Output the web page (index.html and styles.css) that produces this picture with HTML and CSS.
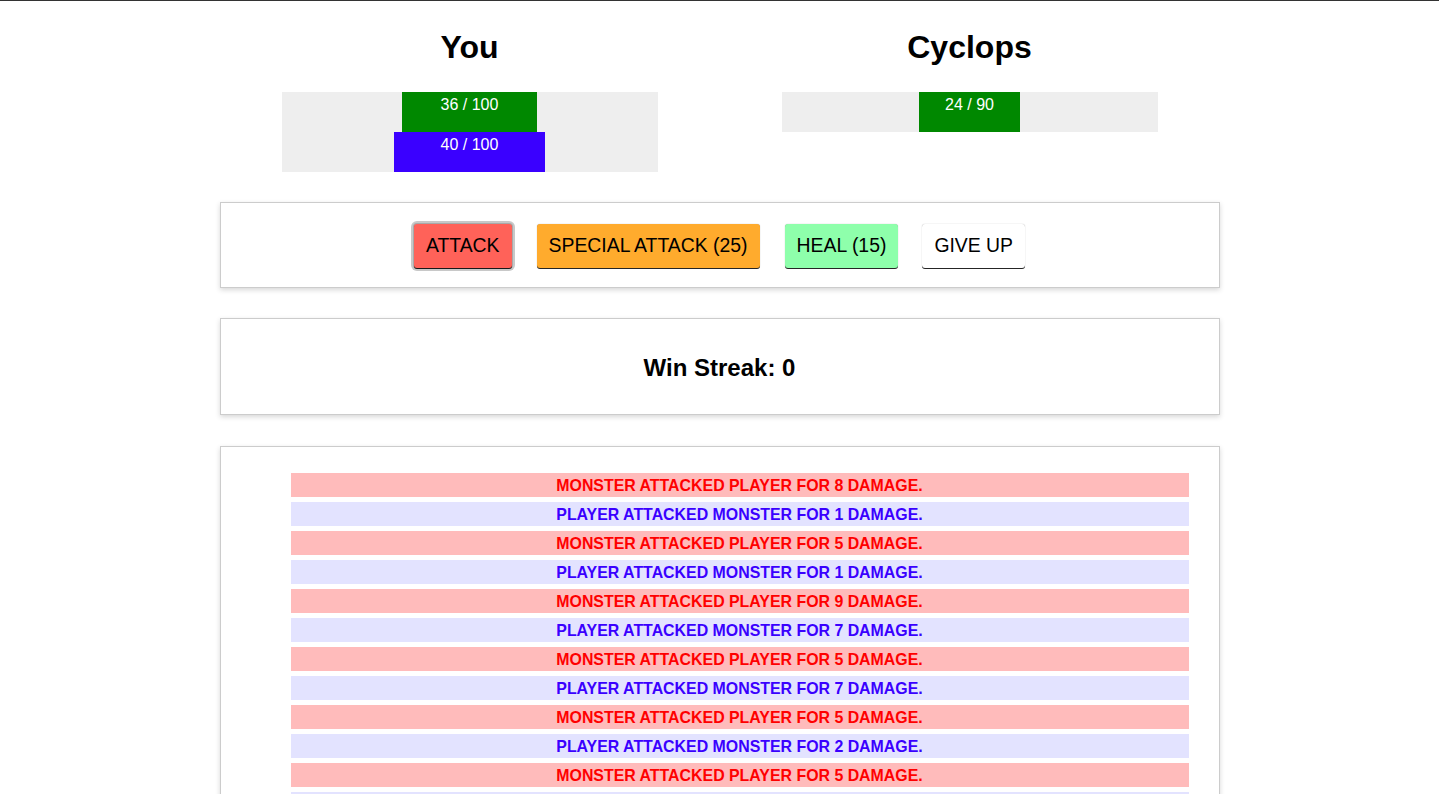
FILE: index.html
```html
<!DOCTYPE html>
<html lang="en">
<head>
<meta charset="utf-8">
<title>Monster Slayer</title>
<link rel="stylesheet" href="styles.css">
</head>
<body>
<main class="page">
  <section class="fighters">
    <div class="fighter">
      <h1 class="fighter-name">You</h1>
      <div class="bars">
        <div class="bar-track">
          <div class="bar-fill bar-health" style="width: 36%">36 / 100</div>
        </div>
        <div class="bar-track">
          <div class="bar-fill bar-mana" style="width: 40%">40 / 100</div>
        </div>
      </div>
    </div>
    <div class="fighter">
      <h1 class="fighter-name">Cyclops</h1>
      <div class="bars">
        <div class="bar-track">
          <div class="bar-fill bar-health" style="width: 26.67%">24 / 90</div>
        </div>
      </div>
    </div>
  </section>

  <section class="card controls">
    <button class="btn btn-attack is-focused">ATTACK</button>
    <button class="btn btn-special">SPECIAL ATTACK (25)</button>
    <button class="btn btn-heal">HEAL (15)</button>
    <button class="btn btn-giveup">GIVE UP</button>
  </section>

  <section class="card streak">
    <h2 class="streak-text">Win Streak: 0</h2>
  </section>

  <section class="card log">
    <ul class="log-list">
      <li class="log-item log-monster">Monster attacked player for 8 damage.</li>
      <li class="log-item log-player">Player attacked monster for 1 damage.</li>
      <li class="log-item log-monster">Monster attacked player for 5 damage.</li>
      <li class="log-item log-player">Player attacked monster for 1 damage.</li>
      <li class="log-item log-monster">Monster attacked player for 9 damage.</li>
      <li class="log-item log-player">Player attacked monster for 7 damage.</li>
      <li class="log-item log-monster">Monster attacked player for 5 damage.</li>
      <li class="log-item log-player">Player attacked monster for 7 damage.</li>
      <li class="log-item log-monster">Monster attacked player for 5 damage.</li>
      <li class="log-item log-player">Player attacked monster for 2 damage.</li>
      <li class="log-item log-monster">Monster attacked player for 5 damage.</li>
      <li class="log-item log-player">Player attacked monster for 4 damage.</li>
      <li class="log-item log-monster">Monster attacked player for 6 damage.</li>
    </ul>
  </section>
</main>
</body>
</html>
```

FILE: styles.css
```css
* {
  box-sizing: border-box;
}

html {
  background: #ffffff;
}

body {
  margin: 0;
  border-top: 1px solid #333333;
  font-family: "Liberation Sans", Arial, Helvetica, sans-serif;
  color: #000000;
  background: #ffffff;
}

.page {
  width: 1000px;
  margin: 0 auto;
}

.fighters {
  display: flex;
}

.fighter {
  flex: 1 1 0;
  display: flex;
  flex-direction: column;
  align-items: center;
}

.fighter-name {
  margin: 28px 0 26px;
  font-size: 32px;
  line-height: 37px;
  font-weight: bold;
}

.bars {
  width: 376px;
  background: #eeeeee;
  display: flex;
  flex-direction: column;
}

.bar-track {
  height: 40px;
  display: flex;
  justify-content: center;
}

.bar-fill {
  height: 40px;
  color: #ffffff;
  font-size: 16px;
  line-height: 25px;
  text-align: center;
  white-space: nowrap;
}

.bar-health {
  background: #008800;
}

.bar-mana {
  background: #3a00ff;
}

.card {
  border: 1px solid #cccccc;
  box-shadow: 0 2px 5px rgba(0, 0, 0, 0.16);
  background: #ffffff;
}

.controls {
  margin-top: 30px;
  padding: 21px 0 19px;
  display: flex;
  justify-content: center;
  gap: 24px;
}

.btn {
  font-family: "Liberation Sans", Arial, Helvetica, sans-serif;
  font-size: 19.4px;
  line-height: 22px;
  height: 44px;
  padding: 10px 12px 12px;
  border: none;
  border-radius: 3px;
  color: #000000;
  box-shadow: 0 1px 0 rgba(0, 0, 0, 0.85), 0 0 1px rgba(0, 0, 0, 0.35);
  cursor: pointer;
}

.btn-attack {
  background: #ff6259;
  margin-right: 1px;
}

.btn-attack.is-focused {
  box-shadow: 0 1px 0 rgba(0, 0, 0, 0.85), 0 0 0 1px #a8a8a8, 0 0 0 3px #c8c8c8;
}

.btn-special {
  background: #ffab2d;
  margin-right: 1px;
}

.btn-heal {
  background: #8effab;
}

.btn-giveup {
  background: #ffffff;
}

.streak {
  margin-top: 30px;
  padding: 35px 0 32px;
  text-align: center;
}

.streak-text {
  margin: 0;
  font-size: 24px;
  line-height: 28px;
  font-weight: bold;
}

.log {
  margin-top: 31px;
  padding: 26px 30px 26px 0;
}

.log-list {
  list-style: none;
  margin: 0;
  padding: 0 0 0 70px;
  display: flex;
  flex-direction: column;
  gap: 5px;
}

.log-item {
  height: 24px;
  padding-top: 1px;
  line-height: 23px;
  text-align: center;
  font-size: 15.9px;
  font-weight: bold;
  text-transform: uppercase;
  white-space: nowrap;
}

.log-monster {
  background: #ffbbbb;
  color: #ff0000;
}

.log-player {
  background: #e3e3ff;
  color: #3a00ff;
}
```
